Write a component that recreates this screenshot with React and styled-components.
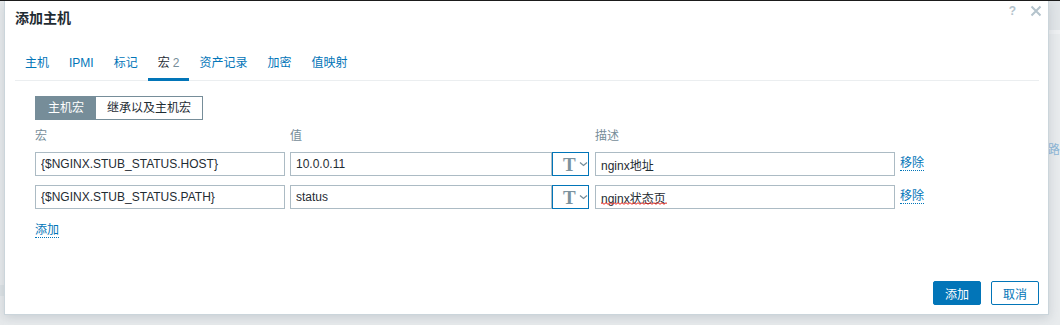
import React from "react";
import styled, { createGlobalStyle } from "styled-components";

const Global = createGlobalStyle`
  html, body { margin: 0; padding: 0; }
  body {
    background: #e8ebed;
    font-family: "Liberation Sans", Arial, "Noto Sans CJK SC", sans-serif;
    font-size: 12px;
    color: #1f2c33;
  }
  * { box-sizing: border-box; }
`;

const Page = styled.div`
  display: flex;
  height: 325px;
  border-top: 1px solid #1b1b1b;
  overflow: hidden;
`;

const LeftStrip = styled.div`
  width: 4px;
  flex: none;
  background: linear-gradient(
    to bottom,
    #e7eaec 0,
    #e7eaec 284px,
    #dde2e5 284px,
    #dde2e5 295px,
    #e7eaec 295px
  );
`;

const RightStrip = styled.div`
  flex: 1;
  background: linear-gradient(
    to bottom,
    #e1e5e8 0,
    #e1e5e8 29px,
    #eef0f2 29px,
    #eef0f2 33px,
    #e8ebed 33px
  );
  padding-top: 139px;
  overflow: hidden;
`;

const BgText = styled.span`
  display: block;
  margin-left: -1px;
  color: #8fb8d8;
  font-size: 12px;
  white-space: nowrap;
`;

const Dialog = styled.div`
  width: 1045px;
  height: 314px;
  flex: none;
  background: #fff;
  border: 1px solid #cbd5db;
  border-top: none;
  box-shadow: 0 3px 10px rgba(60, 80, 95, 0.18);
  display: flex;
  flex-direction: column;
  position: relative;
  z-index: 1;
`;

const Header = styled.div`
  display: flex;
  justify-content: space-between;
  align-items: flex-start;
  height: 36px;
  padding-left: 10px;
`;

const Title = styled.h4`
  margin: 0;
  font-size: 14px;
  font-weight: bold;
  line-height: 35px;
  color: #1f2c33;
`;

const HeadControls = styled.div`
  display: flex;
  align-items: center;
  gap: 14px;
  padding-top: 4px;
  margin-right: 6px;
`;

const Help = styled.span`
  font-size: 12px;
  font-weight: bold;
  color: #b4c3cc;
  line-height: 12px;
`;

const CloseBtn = styled.span`
  display: flex;
  width: 12px;
  height: 12px;
`;

const TabList = styled.div`
  display: flex;
  margin: 12px 9px 0 10px;
  height: 32px;
  border-bottom: 1px solid #ebeef0;
`;

const Tab = styled.div`
  height: 32px;
  margin-bottom: -1px;
  padding: 0 10px;
  line-height: 29px;
  border-bottom: 3px solid ${(p) => (p.$active ? "#0275b8" : "transparent")};
  color: ${(p) => (p.$active ? "#1f2c33" : "#0275b8")};
  white-space: nowrap;
`;

const Count = styled.span`
  color: #768d99;
  margin-left: 3px;
`;

const Body = styled.div`
  flex: 1;
  padding: 15px 20px 0 30px;
`;

const Segment = styled.div`
  display: inline-flex;
  height: 24px;
  border: 1px solid #768d99;
  margin-bottom: 10px;
`;

const SegButton = styled.div`
  padding: 0 ${(p) => (p.$active ? 12 : 11)}px;
  line-height: 22px;
  background: ${(p) => (p.$active ? "#768d99" : "#fff")};
  color: ${(p) => (p.$active ? "#fff" : "#1f2c33")};
`;

const Grid = styled.div`
  display: grid;
  grid-template-columns: 255px 305px 305px auto;
  row-gap: 9px;
  align-items: center;
`;

const ColLabel = styled.div`
  color: #768d99;
  line-height: 13px;
  height: 13px;
`;

const Input = styled.input`
  display: block;
  width: ${(p) => p.$w}px;
  height: 24px;
  border: 1px solid #acbbc4;
  padding: 0 5px;
  font-family: "Liberation Sans", Arial, "Noto Sans CJK SC", sans-serif;
  font-size: 12px;
  color: #1f2c33;
  background: #fff;
  outline: none;
`;

const FieldWrap = styled.div`
  position: relative;
  width: ${(p) => p.$w}px;
`;

const Squiggle = styled.svg`
  position: absolute;
  left: 6px;
  top: 17px;
  pointer-events: none;
`;

const ValueGroup = styled.div`
  display: flex;
  width: 299px;
`;

const TypeButton = styled.div`
  display: flex;
  align-items: center;
  width: 37px;
  height: 24px;
  border: 1px solid #0275b8;
  padding-left: 10px;
  gap: 3px;
`;

const TGlyph = styled.span`
  font-family: "Liberation Serif", "Times New Roman", serif;
  font-size: 19px;
  font-weight: bold;
  color: #7c929e;
  line-height: 18px;
  margin-top: 1px;
`;

const Link = styled.span`
  display: inline-block;
  color: #0275b8;
  border-bottom: 1px dotted #0275b8;
  line-height: 13px;
  cursor: pointer;
`;

const LinkCell = styled.div`
  display: flex;
  align-items: center;
`;

const AddRow = styled.div`
  margin-top: 14px;
`;

const Footer = styled.div`
  display: flex;
  justify-content: flex-end;
  gap: 10px;
  padding: 0 9px 9px 0;
`;

const Button = styled.button`
  height: 24px;
  padding: 0 11px;
  font-family: "Liberation Sans", Arial, "Noto Sans CJK SC", sans-serif;
  font-size: 12px;
  border: 1px solid #0275b8;
  background: ${(p) => (p.$primary ? "#0275b8" : "#fff")};
  color: ${(p) => (p.$primary ? "#fff" : "#0275b8")};
  border-radius: 2px;
  cursor: pointer;
`;

const Chevron = () => (
  <svg width="9" height="6" viewBox="0 0 9 6">
    <polyline points="1,1.5 4.5,4.5 8,1.5" fill="none" stroke="#768d99" strokeWidth="1.3" />
  </svg>
);

const XIcon = () => (
  <svg width="12" height="12" viewBox="0 0 12 12">
    <path d="M1.5 1.5 L10.5 10.5 M10.5 1.5 L1.5 10.5" stroke="#b4c3cc" strokeWidth="2" />
  </svg>
);

const Wave = ({ width }) => {
  let d = "M0 1.5";
  for (let x = 0; x < width; x += 4) {
    d += ` Q${x + 1} 0 ${x + 2} 1.5 Q${x + 3} 3 ${x + 4} 1.5`;
  }
  return (
    <Squiggle width={width} height="3" viewBox={`0 0 ${width} 3`}>
      <path d={d} fill="none" stroke="#e8261d" strokeWidth="1" />
    </Squiggle>
  );
};

const tabs = ["主机", "IPMI", "标记", "宏", "资产记录", "加密", "值映射"];

const macros = [
  { macro: "{$NGINX.STUB_STATUS.HOST}", value: "10.0.0.11", desc: "nginx地址" },
  { macro: "{$NGINX.STUB_STATUS.PATH}", value: "status", desc: "nginx状态页", spell: true },
];

export default function App() {
  return (
    <>
      <Global />
      <Page>
        <LeftStrip />
        <Dialog>
          <Header>
            <Title>添加主机</Title>
            <HeadControls>
              <Help>?</Help>
              <CloseBtn>
                <XIcon />
              </CloseBtn>
            </HeadControls>
          </Header>
          <TabList>
            {tabs.map((t) => (
              <Tab key={t} $active={t === "宏"}>
                {t}
                {t === "宏" && <Count>2</Count>}
              </Tab>
            ))}
          </TabList>
          <Body>
            <Segment>
              <SegButton $active>主机宏</SegButton>
              <SegButton>继承以及主机宏</SegButton>
            </Segment>
            <Grid>
              <ColLabel>宏</ColLabel>
              <ColLabel>值</ColLabel>
              <ColLabel>描述</ColLabel>
              <div />
              {macros.map((m) => (
                <React.Fragment key={m.macro}>
                  <Input $w={250} defaultValue={m.macro} spellCheck={false} />
                  <ValueGroup>
                    <Input $w={262} defaultValue={m.value} spellCheck={false} />
                    <TypeButton>
                      <TGlyph>T</TGlyph>
                      <Chevron />
                    </TypeButton>
                  </ValueGroup>
                  <FieldWrap $w={300}>
                    <Input $w={300} defaultValue={m.desc} spellCheck={false} />
                    {m.spell && <Wave width={66} />}
                  </FieldWrap>
                  <LinkCell>
                    <Link>移除</Link>
                  </LinkCell>
                </React.Fragment>
              ))}
            </Grid>
            <AddRow>
              <Link>添加</Link>
            </AddRow>
          </Body>
          <Footer>
            <Button $primary>添加</Button>
            <Button>取消</Button>
          </Footer>
        </Dialog>
        <RightStrip>
          <BgText>路</BgText>
        </RightStrip>
      </Page>
    </>
  );
}
